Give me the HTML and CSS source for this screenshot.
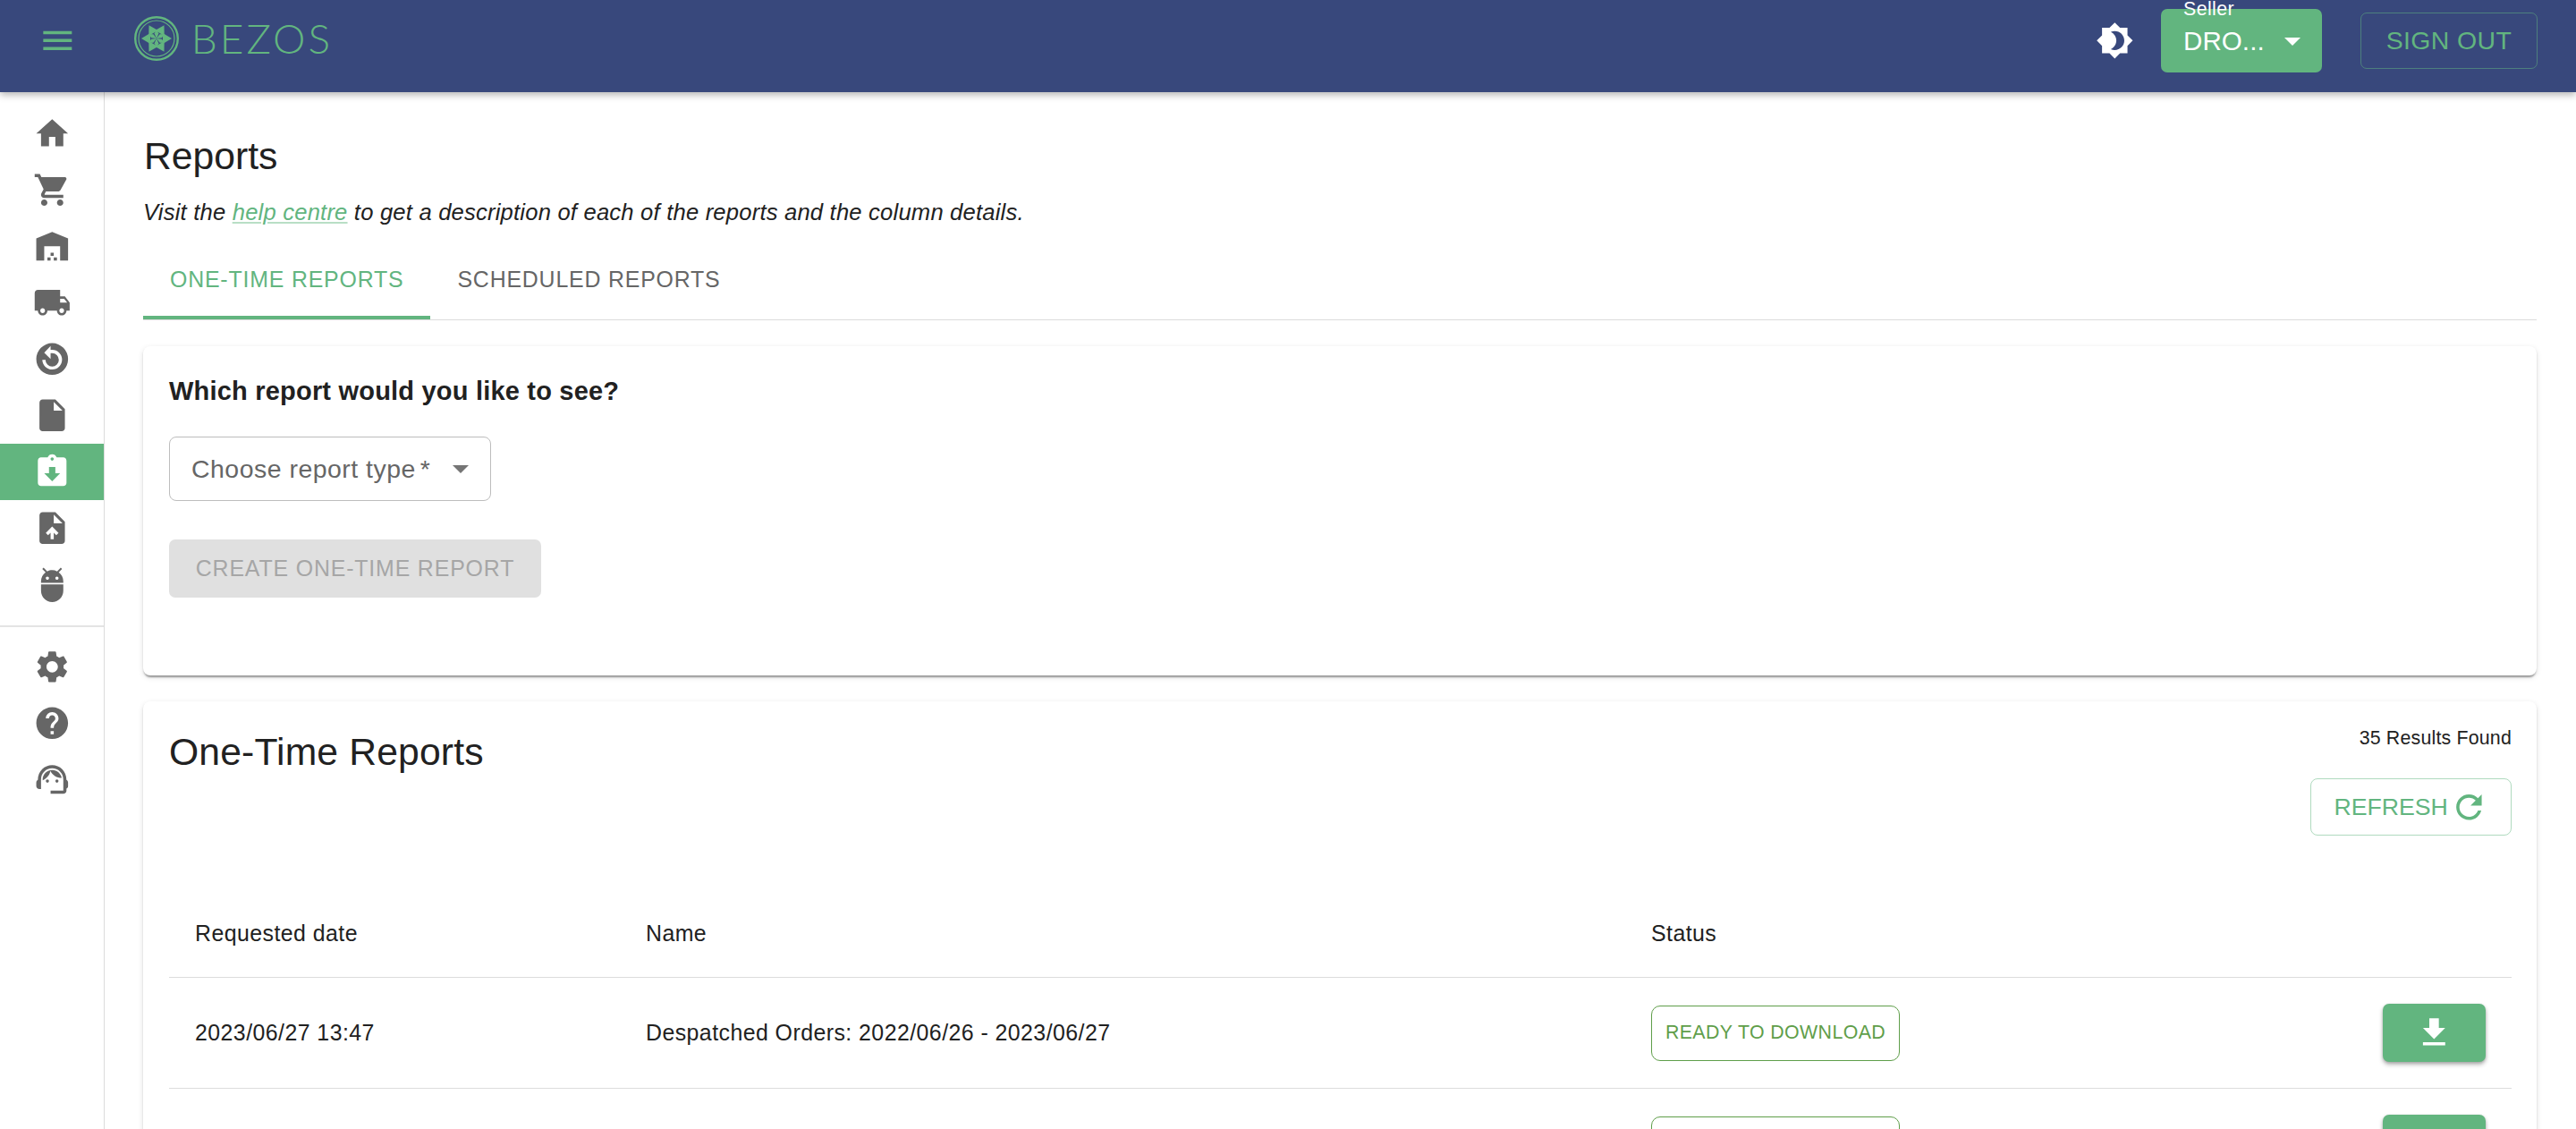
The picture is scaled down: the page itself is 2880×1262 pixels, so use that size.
FILE: index.html
```html
<!DOCTYPE html>
<html lang="en">
<head>
<meta charset="utf-8">
<title>Reports</title>
<link rel="stylesheet" href="styles.css">
</head>
<body>
<div class="app">
  <header class="topbar">
    <button class="menu-btn" type="button" aria-label="Menu">
      <svg class="ico" viewBox="0 0 24 24"><path d="M3 18h18v-2H3v2zm0-5h18v-2H3v2zm0-7v2h18V6H3z"/></svg>
    </button>
    <div class="brand">
      <svg class="brand-mark" viewBox="0 0 50 50">
        <circle class="ring" cx="25" cy="25" r="23.8"/>
        <circle class="ring thin" cx="25" cy="25" r="20"/>
        <g class="petals">
          <polygon points="42,25 32,19 32,31"/>
          <polygon points="42,25 32,19 32,31" transform="rotate(60 25 25)"/>
          <polygon points="42,25 32,19 32,31" transform="rotate(120 25 25)"/>
          <polygon points="42,25 32,19 32,31" transform="rotate(180 25 25)"/>
          <polygon points="42,25 32,19 32,31" transform="rotate(240 25 25)"/>
          <polygon points="42,25 32,19 32,31" transform="rotate(300 25 25)"/>
          <polygon points="25,25 27.4,19.5 25,15 22.6,19.5"/>
          <polygon points="25,25 27.4,19.5 25,15 22.6,19.5" transform="rotate(60 25 25)"/>
          <polygon points="25,25 27.4,19.5 25,15 22.6,19.5" transform="rotate(120 25 25)"/>
          <polygon points="25,25 27.4,19.5 25,15 22.6,19.5" transform="rotate(180 25 25)"/>
          <polygon points="25,25 27.4,19.5 25,15 22.6,19.5" transform="rotate(240 25 25)"/>
          <polygon points="25,25 27.4,19.5 25,15 22.6,19.5" transform="rotate(300 25 25)"/>
        </g>
      </svg>
      <span class="brand-name">BEZOS</span>
    </div>
    <div class="spacer"></div>
    <svg class="ico theme" viewBox="0 0 24 24"><path d="M20 8.69V4h-4.69L12 .69 8.69 4H4v4.69L.69 12 4 15.31V20h4.69L12 23.31 15.31 20H20v-4.69L23.31 12 20 8.69zM12 18c-.89 0-1.74-.2-2.5-.55C11.56 16.5 13 14.42 13 12s-1.44-4.5-3.5-5.45C10.26 6.2 11.11 6 12 6c3.31 0 6 2.69 6 6s-2.69 6-6 6z"/></svg>
    <div class="seller">
      <span class="seller-label">Seller</span>
      <span class="seller-value">DRO...</span>
      <span class="seller-caret"></span>
    </div>
    <button class="signout" type="button">SIGN OUT</button>
  </header>

  <div class="body">
    <nav class="sidebar">
      <a class="nav-item"><svg class="ico" viewBox="0 0 24 24"><path d="M10 20v-6h4v6h5v-8h3L12 3 2 12h3v8z"/></svg></a>
      <a class="nav-item"><svg class="ico" viewBox="0 0 24 24"><path d="M7 18c-1.1 0-1.99.9-1.99 2S5.9 22 7 22s2-.9 2-2-.9-2-2-2zM1 2v2h2l3.6 7.59-1.35 2.45c-.16.28-.25.61-.25.96 0 1.1.9 2 2 2h12v-2H7.42c-.14 0-.25-.11-.25-.25l.03-.12.9-1.63h7.45c.75 0 1.41-.41 1.75-1.03l3.58-6.49c.08-.14.12-.31.12-.48 0-.55-.45-1-1-1H5.21l-.94-2H1zm16 16c-1.1 0-1.99.9-1.99 2s.89 2 1.99 2 2-.9 2-2-.9-2-2-2z"/></svg></a>
      <a class="nav-item"><svg class="ico" viewBox="0 0 24 24"><path d="M22 21V7L12 3 2 7v14h5v-9h10v9h5zm-11-2H9v2h2v-2zm2-3h-2v2h2v-2zm2 3h-2v2h2v-2z"/></svg></a>
      <a class="nav-item"><svg class="ico" viewBox="0 0 24 24"><path d="M20 8h-3V4H3c-1.1 0-2 .9-2 2v11h2c0 1.66 1.34 3 3 3s3-1.34 3-3h6c0 1.66 1.34 3 3 3s3-1.34 3-3h2v-5l-3-4zM6 18.5c-.83 0-1.5-.67-1.5-1.5s.67-1.5 1.5-1.5 1.5.67 1.5 1.5-.67 1.5-1.5 1.5zm13.5-9l1.96 2.5H17V9.5h2.5zm-1.5 9c-.83 0-1.5-.67-1.5-1.5s.67-1.5 1.5-1.5 1.5.67 1.5 1.5-.67 1.5-1.5 1.5z"/></svg></a>
      <a class="nav-item"><svg class="ico" viewBox="0 0 24 24"><path fill-rule="evenodd" d="M12 2a10 10 0 1 0 0 20 10 10 0 0 0 0-20zM12 6.2H11V3.8L7 8l4 4V8.3h1A4.2 4.2 0 1 1 7.8 12.5H5.8A6.2 6.2 0 1 0 12 6.2z"/></svg></a>
      <a class="nav-item"><svg class="ico" viewBox="0 0 24 24"><path d="M6 2c-1.1 0-1.99.9-1.99 2L4 20c0 1.1.89 2 1.99 2H18c1.1 0 2-.9 2-2V8l-6-6H6zm7 7V3.5L18.5 9H13z"/></svg></a>
      <a class="nav-item active"><svg class="ico" viewBox="0 0 24 24"><path d="M19 3h-4.18C14.4 1.84 13.3 1 12 1c-1.3 0-2.4.84-2.82 2H5c-1.1 0-2 .9-2 2v14c0 1.1.9 2 2 2h14c1.1 0 2-.9 2-2V5c0-1.1-.9-2-2-2zm-7 0c.55 0 1 .45 1 1s-.45 1-1 1-1-.45-1-1 .45-1 1-1zm0 15l-5-5h3V9h4v4h3l-5 5z"/></svg></a>
      <a class="nav-item"><svg class="ico" viewBox="0 0 24 24"><path fill-rule="evenodd" d="M6 2c-1.1 0-1.99.9-1.99 2L4 20c0 1.1.89 2 1.99 2H18c1.1 0 2-.9 2-2V8l-6-6H6zm7 7V3.5L18.5 9H13zM12 11l-4 4 1.41 1.41L11 14.84V19h2v-4.16l1.59 1.59L16 15z"/></svg></a>
      <a class="nav-item"><svg class="ico" viewBox="0 0 24 24"><path d="M5 16c0 3.87 3.13 7 7 7s7-3.13 7-7v-4H5v4zM16.12 4.37l2.1-2.1-.82-.83-2.3 2.31C14.16 3.28 13.12 3 12 3s-2.16.28-3.09.75L6.6 1.44l-.82.83 2.1 2.1C6.14 5.64 5 7.68 5 10v1h14v-1c0-2.32-1.14-4.36-2.88-5.63zM9 9c-.55 0-1-.45-1-1s.45-1 1-1 1 .45 1 1-.45 1-1 1zm6 0c-.55 0-1-.45-1-1s.45-1 1-1 1 .45 1 1-.45 1-1 1z"/></svg></a>
      <div class="nav-divider"></div>
      <a class="nav-item"><svg class="ico" viewBox="0 0 24 24"><path d="M19.14 12.94c.04-.3.06-.61.06-.94 0-.32-.02-.64-.07-.94l2.03-1.58c.18-.14.23-.41.12-.61l-1.92-3.32c-.12-.22-.37-.29-.59-.22l-2.39.96c-.5-.38-1.03-.7-1.62-.94l-.36-2.54c-.04-.24-.24-.41-.48-.41h-3.84c-.24 0-.43.17-.47.41l-.36 2.54c-.59.24-1.13.57-1.62.94l-2.39-.96c-.22-.08-.47 0-.59.22L2.74 8.87c-.12.21-.08.47.12.61l2.03 1.58c-.05.3-.09.63-.09.94s.02.64.07.94l-2.03 1.58c-.18.14-.23.41-.12.61l1.92 3.32c.12.22.37.29.59.22l2.39-.96c.5.38 1.03.7 1.62.94l.36 2.54c.05.24.24.41.48.41h3.84c.24 0 .44-.17.47-.41l.36-2.54c.59-.24 1.13-.56 1.62-.94l2.39.96c.22.08.47 0 .59-.22l1.92-3.32c.12-.22.07-.47-.12-.61l-2.01-1.58zM12 15.6c-1.98 0-3.6-1.62-3.6-3.6s1.62-3.6 3.6-3.6 3.6 1.62 3.6 3.6-1.62 3.6-3.6 3.6z"/></svg></a>
      <a class="nav-item"><svg class="ico" viewBox="0 0 24 24"><path d="M12 2C6.48 2 2 6.48 2 12s4.48 10 10 10 10-4.48 10-10S17.52 2 12 2zm1 17h-2v-2h2v2zm2.07-7.75l-.9.92C13.45 12.9 13 13.5 13 15h-2v-.5c0-1.1.45-2.1 1.17-2.83l1.24-1.26c.37-.36.59-.86.59-1.41 0-1.1-.9-2-2-2s-2 .9-2 2H8c0-2.21 1.79-4 4-4s4 1.79 4 4c0 .88-.36 1.68-.93 2.25z"/></svg></a>
      <a class="nav-item"><svg class="ico" viewBox="0 0 24 24"><path d="M21 12.22C21 6.73 16.74 3 12 3c-4.69 0-9 3.65-9 9.28-.6.34-1 .98-1 1.72v2c0 1.1.9 2 2 2h1v-6.1c0-3.87 3.13-7 7-7s7 3.13 7 7V19h-8v2h8c1.1 0 2-.9 2-2v-1.22c.59-.31 1-.92 1-1.61v-2.3c0-.67-.41-1.28-1-1.65z"/><circle cx="9" cy="13" r="1"/><circle cx="15" cy="13" r="1"/><path d="M18 11.03C17.52 8.18 15.04 6 12.05 6c-3.03 0-6.29 2.51-6.03 6.45 2.47-1.01 4.33-3.21 4.86-5.89 1.31 2.63 4 4.44 7.12 4.47z"/></svg></a>
    </nav>

    <main class="main">
      <h1 class="page-title">Reports</h1>
      <p class="page-note">Visit the <a class="help-link">help centre</a> to get a description of each of the reports and the column details.</p>
      <div class="tabs">
        <div class="tab selected">ONE-TIME REPORTS</div>
        <div class="tab">SCHEDULED REPORTS</div>
      </div>

      <section class="card create-card">
        <h2 class="card-question">Which report would you like to see?</h2>
        <div class="select-box">
          <span class="select-text">Choose report type<span class="req">*</span></span>
          <span class="select-caret"></span>
        </div>
        <button class="create-btn" type="button" disabled>CREATE ONE-TIME REPORT</button>
      </section>

      <section class="card list-card">
        <div class="list-head">
          <h2 class="list-title">One-Time Reports</h2>
          <div class="list-actions">
            <span class="results">35 Results Found</span>
            <button class="refresh" type="button">REFRESH
              <svg class="ico" viewBox="0 0 24 24"><path d="M17.65 6.35C16.2 4.9 14.21 4 12 4c-4.42 0-7.99 3.58-7.99 8s3.57 8 7.99 8c3.73 0 6.84-2.55 7.73-6h-2.08c-.82 2.33-3.04 4-5.65 4-3.31 0-6-2.69-6-6s2.69-6 6-6c1.66 0 3.14.69 4.22 1.78L13 11h7V4l-2.35 2.35z"/></svg>
            </button>
          </div>
        </div>
        <table class="report-table">
          <colgroup><col class="col-date"><col class="col-name"><col class="col-status"><col></colgroup>
          <thead>
            <tr><th>Requested date</th><th>Name</th><th>Status</th><th></th></tr>
          </thead>
          <tbody>
            <tr>
              <td>2023/06/27 13:47</td>
              <td>Despatched Orders: 2022/06/26 - 2023/06/27</td>
              <td><span class="chip">READY TO DOWNLOAD</span></td>
              <td class="cell-action"><button class="dl-btn" type="button" aria-label="Download"><svg class="ico" viewBox="0 0 24 24"><path d="M19 9h-4V3H9v6H5l7 7 7-7zM5 18v2h14v-2H5z"/></svg></button></td>
            </tr>
            <tr>
              <td></td>
              <td></td>
              <td><span class="chip">READY TO DOWNLOAD</span></td>
              <td class="cell-action"><button class="dl-btn" type="button" aria-label="Download"><svg class="ico" viewBox="0 0 24 24"><path d="M19 9h-4V3H9v6H5l7 7 7-7zM5 18v2h14v-2H5z"/></svg></button></td>
            </tr>
          </tbody>
        </table>
      </section>
    </main>
  </div>
</div>
</body>
</html>
```

FILE: styles.css
```css
* { box-sizing: border-box; }
html, body { margin: 0; height: 100%; overflow: hidden; background: #fff; }
body { font-family: "Liberation Sans", Arial, sans-serif; color: #212121; }
button { font-family: inherit; }
.ico { width: 42.67px; height: 42.67px; fill: currentColor; display: block; flex: none; }

.app { height: 1262px; display: flex; flex-direction: column; overflow: hidden; }

.topbar { position: relative; z-index: 2; flex: none; height: 103px; padding: 0 43px 12px 43px; background: #38487c; display: flex; align-items: center; box-shadow: 0 3px 8px rgba(0,0,0,.3); }
.menu-btn { padding: 0; border: 0; background: none; color: #62b57f; }
.brand { display: flex; align-items: center; margin: -5px 0 0 64px; }
.brand-mark { width: 50px; height: 50px; display: block; }
.ring { fill: none; stroke: #62b57f; stroke-width: 2.4; }
.ring.thin { stroke-width: 1.2; }
.petals { fill: #62b57f; }
.brand-name { margin-left: 14px; font-family: Lato, sans-serif; font-weight: 300; font-size: 46px; letter-spacing: 3px; line-height: 50px; color: #62b57f; }
.spacer { flex: 1; }
.theme { color: #fff; margin-right: 30px; }
.seller { position: relative; width: 180px; height: 71px; padding-left: 25px; border-radius: 7px; background: #62b57f; color: #fff; display: flex; align-items: center; }
.seller-label { position: absolute; left: 25px; top: -10px; font-size: 21.33px; letter-spacing: .4px; line-height: 20px; }
.seller-value { font-size: 29.5px; letter-spacing: .1px; }
.seller-caret { position: absolute; left: 138px; top: 32px; border-left: 9px solid transparent; border-right: 9px solid transparent; border-top: 9px solid #fff; }
.signout { margin-left: 43px; width: 198px; height: 63px; border: 1.5px solid rgba(98,181,127,.5); border-radius: 7px; background: none; color: #62b57f; font-size: 28.44px; letter-spacing: .4px; padding: 0; }

.body { flex: 1; display: flex; min-height: 0; }
.sidebar { flex: none; width: 117px; padding-top: 15px; border-right: 1px solid #dcdcdc; background: #fff; color: #666; }
.nav-item { height: 63px; display: flex; align-items: center; justify-content: center; }
.nav-item.active { background: #62b57f; color: #fff; }
.nav-divider { height: 2px; margin: 14px 0 13px; background: #e4e4e4; }

.main { flex: 1; min-width: 0; padding: 45px 44px 0 43px; }
.page-title { margin: 0 0 0 1px; font-size: 42.67px; font-weight: 400; line-height: 52px; color: #212121; }
.page-note { margin: 19px 0 0; font-size: 25.6px; font-style: italic; letter-spacing: .2px; line-height: 36px; color: #212121; }
.help-link { color: #62b57f; text-decoration: underline; text-decoration-color: rgba(98,181,127,.45); }

.tabs { margin-top: 16px; height: 87px; display: flex; border-bottom: 1px solid #dcdcdc; }
.tab { height: 86px; padding: 1px 30px 0; display: flex; align-items: center; font-size: 24.89px; letter-spacing: .82px; color: #666; border-bottom: 4px solid transparent; }
.tab.selected { color: #62b57f; border-bottom-color: #62b57f; }

.card { background: #fff; border-radius: 8px; box-shadow: 0 3.5px 2px -2px rgba(0,0,0,.25), 0 2px 2px rgba(0,0,0,.14), 0 2px 6px rgba(0,0,0,.12); }
.create-card { margin-top: 29px; height: 368px; padding: 32px 29px 0; }
.card-question { margin: 0; font-size: 29px; letter-spacing: .2px; line-height: 36px; font-weight: 700; color: #212121; }
.select-box { position: relative; margin-top: 33px; width: 360px; height: 72px; padding-left: 24px; border: 1.5px solid #bdbdbd; border-radius: 8px; display: flex; align-items: center; }
.select-text { font-size: 28.44px; letter-spacing: .5px; color: #666; }
.req { margin-left: 5px; }
.select-caret { position: absolute; right: 24px; top: 31px; border-left: 9px solid transparent; border-right: 9px solid transparent; border-top: 9px solid #757575; }
.create-btn { display: block; margin-top: 43px; width: 416px; height: 65px; padding: 0; border: 0; border-radius: 7px; background: #e0e0e0; color: #a6a6a6; font-size: 24.89px; letter-spacing: .85px; }

.list-card { margin-top: 29px; padding: 27px 28px 0 29px; height: 600px; }
.list-head { display: flex; justify-content: space-between; align-items: flex-start; height: 183px; }
.list-title { margin: 3px 0 0; font-size: 42.67px; font-weight: 400; letter-spacing: .15px; line-height: 52px; color: #212121; }
.list-actions { display: flex; flex-direction: column; align-items: flex-end; }
.results { font-size: 21.33px; letter-spacing: .2px; line-height: 28px; color: #212121; }
.refresh { margin-top: 31px; width: 225px; height: 64px; padding: 0; border: 1.5px solid rgba(98,181,127,.5); border-radius: 8px; background: none; color: #62b57f; font-size: 26.67px; display: flex; align-items: center; justify-content: center; gap: 2px; }

.report-table { width: 100%; border-collapse: separate; border-spacing: 0; table-layout: fixed; }
.col-date { width: 504px; }
.col-name { width: 1124px; }
.col-status { width: 600px; }
.report-table th, .report-table td { padding: 0 0 0 29px; text-align: left; font-size: 24.89px; font-weight: 400; letter-spacing: .45px; color: #212121; border-bottom: 1px solid #dcdcdc; }
.report-table th { height: 99px; }
.report-table td { height: 124px; }
.report-table .cell-action { padding: 0 29px 0 0; }
.chip { display: inline-flex; align-items: center; justify-content: center; width: 278px; height: 62px; border: 1.5px solid #5f9e4a; border-radius: 10px; color: #5f9e4a; font-size: 21.33px; letter-spacing: .4px; vertical-align: middle; }
.dl-btn { display: flex; align-items: center; justify-content: center; margin-left: auto; width: 115px; height: 65px; padding: 0; border: 0; border-radius: 7px; background: #62b57f; color: #fff; box-shadow: 0 3px 5px rgba(0,0,0,.28), 0 1px 3px rgba(0,0,0,.15); }
```
